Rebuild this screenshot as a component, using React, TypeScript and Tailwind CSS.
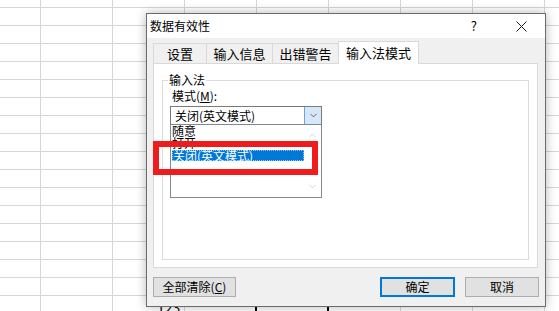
import { ChevronDown, ChevronUp } from "lucide-react";

const tabs = [
    { label: "设置", w: "w-[53px]" },
    { label: "输入信息", w: "w-[66px]" },
    { label: "出错警告", w: "w-[66px]" },
];

const CloseGlyph = () => (
    <svg width="11" height="11" viewBox="0 0 11 11">
        <path d="M0.5 0.5 L10.5 10.5 M10.5 0.5 L0.5 10.5" stroke="#1a1a1a" strokeWidth="1" fill="none" />
    </svg>
);

const ModeList = () => {
    return (
        <div className="relative -mt-px w-[152px] h-[74px] border border-[#828790] bg-white flex">
            <div className="flex-1 flex flex-col text-[12px] leading-[12px] text-black">
                <div className="h-[12px] pl-[1px]">随意</div>
                <div className="h-[12px] pl-[1px]">打开</div>
                <div className="h-[11px] mt-[1px] ml-px bg-[#0078d7] text-white pl-px leading-[11px] outline-1 outline-dotted outline-[#9cc9ef] -outline-offset-1">
                    关闭(英文模式)
                </div>
            </div>
            <div className="w-[17px] flex flex-col justify-between items-center py-[5px] bg-white">
                <ChevronUp size={11} strokeWidth={1.5} color="#c4c4c4" />
                <ChevronDown size={11} strokeWidth={1.5} color="#c4c4c4" />
            </div>
        </div>
    );
};

export default function App() {
    return (
        <div className="relative w-[559px] h-[311px] overflow-hidden bg-white font-['Noto_Sans_CJK_SC','Microsoft_YaHei',sans-serif] bg-[linear-gradient(to_right,#d6d6d6_1px,transparent_1px),linear-gradient(to_bottom,#d6d6d6_1px,transparent_1px)] bg-[size:72px_18px] bg-[position:40px_7px]">
            {/* cell content peeking out below the dialog */}
            <div className="absolute left-[157px] top-[300px] text-[14px] leading-[14px] text-black">123</div>
            <div className="absolute left-[255px] top-[305px] w-[2px] h-[6px] bg-black" />
            <div className="absolute left-[327px] top-[305px] w-[2px] h-[6px] bg-black" />

            {/* dialog */}
            <div className="absolute left-[146px] top-[13px] w-[400px] h-[294px] border border-[#6b6b6b] bg-[#f0f0f0] flex flex-col shadow-[0_0_10px_rgba(0,0,0,0.28)] text-[12px] text-black">
                <div className="h-[24px] bg-white flex items-center">
                    <span className="pl-[3px] leading-[16px]">数据有效性</span>
                    <span className="ml-auto mr-[39px] text-[13px]">?</span>
                    <span className="mr-[18px] flex items-center"><CloseGlyph /></span>
                </div>

                <div className="flex-1 flex flex-col pt-[5px]">
                    <div className="flex h-[20px] ml-[6px] items-end relative z-10">
                        {tabs.map((t) => (
                            <div
                                key={t.label}
                                className={`${t.w} h-[20px] border-t border-l border-[#d9d9d9] flex items-center justify-center leading-[16px] text-[13px]`}
                            >
                                {t.label}
                            </div>
                        ))}
                        <div className="w-[81px] h-[23px] -mb-px -mt-[2px] border-t border-x border-[#d9d9d9] bg-white flex items-center justify-center leading-[16px] text-[13px]">
                            输入法模式
                        </div>
                    </div>

                    <div className="ml-[6px] mr-[7px] h-[205px] border border-[#d9d9d9] bg-white flex flex-col">
                        <div className="relative mt-[16px] mx-[8px] mb-[7px] flex-1 border border-[#dcdcdc] flex flex-col pl-[7px] pt-[7px]">
                            <span className="absolute -top-[9px] left-[5px] bg-white px-px leading-[16px]">输入法</span>
                            <div className="ml-[2px] leading-[16px]">模式(<u>M</u>):</div>
                            <div className="mt-[2px] w-[152px] h-[19px] border border-[#7a7a7a] bg-white flex">
                                <div className="flex-1 pl-[4px] leading-[17px]">关闭(英文模式)</div>
                                <div className="w-[17px] bg-[#d6e8f8] border-l border-[#6aa6de] flex items-center justify-center">
                                    <ChevronDown size={11} strokeWidth={1.5} color="#333" />
                                </div>
                            </div>
                            <ModeList />
                        </div>
                    </div>

                    <div className="mt-[9px] mx-[6px] flex items-center">
                        <button className="w-[83px] h-[20px] bg-[#e1e1e1] border border-[#adadad] leading-[16px]">
                            全部清除(<u>C</u>)
                        </button>
                        <button className="ml-auto w-[75px] h-[20px] bg-[#e1e1e1] border-2 border-[#0078d7] leading-[16px]">
                            确定
                        </button>
                        <button className="ml-[10px] w-[74px] h-[20px] bg-[#e1e1e1] border border-[#adadad] leading-[16px]">
                            取消
                        </button>
                    </div>
                </div>
            </div>

            {/* red highlight around the chosen item */}
            <div className="absolute left-[153px] top-[141px] w-[165px] h-[34px] border-[6px] border-[#ee1c1c]" />
        </div>
    );
}
